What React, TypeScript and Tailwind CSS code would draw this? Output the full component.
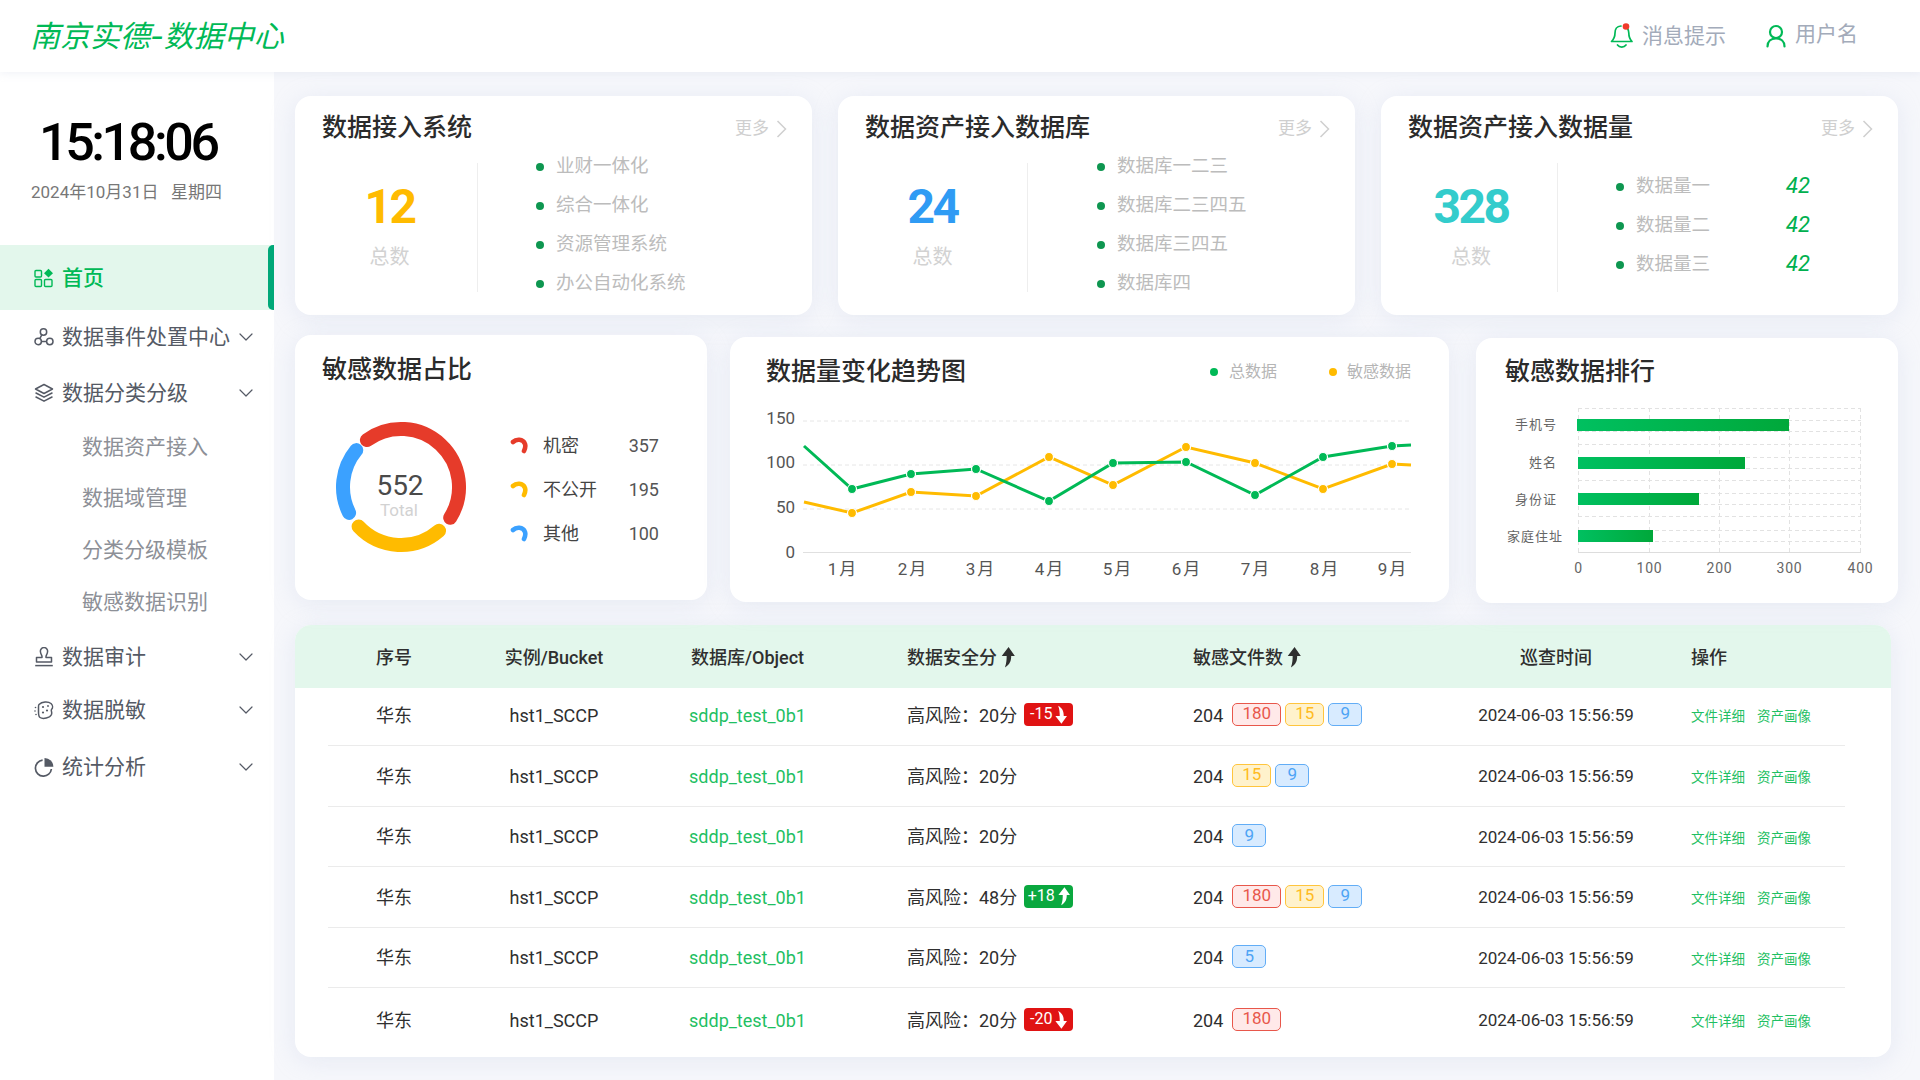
import { ChevronDown } from 'lucide-react'

const GREEN = '#00b956'

// ---- small icons ----
const HomeIcon = () => (
  <svg width="20" height="20" viewBox="0 0 20 20" fill="none" stroke="#00b956" strokeWidth="1.4">
    <rect x="1" y="2.5" width="6.5" height="6.5" rx="1" />
    <rect x="1" y="11.5" width="6.5" height="7" rx="1" />
    <rect x="10.5" y="11.5" width="7.5" height="7" rx="1" />
    <path d="M14.5 0.8 L19 5.2 L14.5 9.6 L10 5.2 Z" fill="#00b956" stroke="none" />
  </svg>
)
const EventIcon = () => (
  <svg width="20" height="20" viewBox="0 0 20 20" fill="none" stroke="#555a65" strokeWidth="1.5">
    <circle cx="9.5" cy="5" r="3.2" />
    <circle cx="4.2" cy="14.5" r="3.2" />
    <circle cx="15.8" cy="14.5" r="3.2" />
    <path d="M7.8 7.8 L5.8 11.6 M7.4 14.5 H12.6" />
  </svg>
)
const LayersIcon = () => (
  <svg width="20" height="20" viewBox="0 0 20 20" fill="none" stroke="#555a65" strokeWidth="1.5" strokeLinejoin="round" strokeLinecap="round">
    <path d="M10 1.5 L18.5 6 L10 10.5 L1.5 6 Z" />
    <path d="M2 10 L10 14.2 L18 10" />
    <path d="M2 14 L10 18.2 L18 14" />
  </svg>
)
const StampIcon = () => (
  <svg width="20" height="20" viewBox="0 0 20 20" fill="none" stroke="#555a65" strokeWidth="1.5" strokeLinejoin="round">
    <path d="M6.5 5 A3.6 3.6 0 1 1 13.5 5 C13.5 7 12 8 12 9.5 V10.5 H17.5 V15 H2.5 V10.5 H8 V9.5 C8 8 6.5 7 6.5 5 Z" />
    <path d="M1.2 18.6 H18.8" />
  </svg>
)
const MaskIcon = () => (
  <svg width="20" height="20" viewBox="0 0 20 20" fill="none" stroke="#555a65" strokeWidth="1.5">
    <path d="M5 4.5 C8 1.5 14 1 17 3.5 C19 5.5 19 8 17.5 9.5 C16.5 10.5 18.5 12 17.5 14.5 C16 18 9 19.5 6 17.5 C4.5 16.5 4.5 14 4.5 12 V7 C4.5 6 4.5 5 5 4.5 Z" />
    <g fill="#555a65" stroke="none">
      <circle cx="9" cy="7" r="1.1" />
      <circle cx="13" cy="10.5" r="1.1" />
      <circle cx="9" cy="12.5" r="1.1" />
      <circle cx="14" cy="6" r="0.9" />
      <circle cx="1.5" cy="7.5" r="0.8" />
      <circle cx="1" cy="11" r="0.8" />
      <circle cx="2" cy="14.5" r="0.8" />
    </g>
  </svg>
)
const PieIcon = () => (
  <svg width="20" height="20" viewBox="0 0 20 20" fill="none">
    <path d="M8.6 3.2 A8 8 0 1 0 17.4 12" stroke="#555a65" strokeWidth="1.7" />
    <path d="M10.5 1 A8.8 8.8 0 0 1 19.4 9.8 H10.5 Z" fill="#555a65" />
  </svg>
)
const BellIcon = () => (
  <svg width="24" height="26" viewBox="0 0 24 26" fill="none" stroke="#00b956" strokeWidth="1.7" strokeLinecap="round" strokeLinejoin="round">
    <path d="M11 3 C6.5 3 5 6.5 5 10 C5 14 4 16 1.5 18.5 H22 C19.5 16 18.8 14 18.8 10 C18.8 8.5 18.5 7 17.5 5.5" />
    <path d="M7.5 22 C9.5 24.8 14 24.8 16 22" />
    <circle cx="16" cy="3.5" r="3.3" fill="#f03a2a" stroke="none" />
  </svg>
)
const UserIcon = () => (
  <svg width="20" height="24" viewBox="0 0 20 24" fill="none" stroke="#00b956" strokeWidth="2.2" strokeLinecap="round">
    <circle cx="10" cy="8" r="6" />
    <path d="M1.5 22.5 C1.5 17.5 5 14.5 10 14.5 C15 14.5 18.5 17.5 18.5 22.5" />
  </svg>
)
const More = () => (
  <div className="flex translate-y-[1px] items-center gap-[7px] text-[17px] text-[#cfcfcf]">
    更多
    <svg width="11" height="18" viewBox="0 0 11 18" fill="none" stroke="#cfcfcf" strokeWidth="1.5">
      <path d="M1.5 1 L9.5 9 L1.5 17" />
    </svg>
  </div>
)
const SortArrow = ({ color, down, big }: { color: string; down?: boolean; big?: boolean }) => (
  <svg width={big ? 15 : 13} height={big ? 21 : 19} viewBox="0 0 14 20" fill={color} className={down ? '-scale-y-100' : ''}>
    <path d="M8 0 L14 8.5 H10.5 C10.5 13 9.5 16.5 4.5 19.5 C6 15.5 6.2 12 6.2 8.5 H1.5 Z" />
  </svg>
)

// ---- sidebar ----
const menu = [
  { label: '数据事件处置中心', icon: <EventIcon />, h: 'h-[54px]', chev: true },
  { label: '数据分类分级', icon: <LayersIcon />, h: 'h-[58px]', chev: true },
  { label: '数据资产接入', sub: true, h: 'h-[50px]' },
  { label: '数据域管理', sub: true, h: 'h-[52px]' },
  { label: '分类分级模板', sub: true, h: 'h-[52px]' },
  { label: '敏感数据识别', sub: true, h: 'h-[52px]' },
  { label: '数据审计', icon: <StampIcon />, h: 'h-[58px]', chev: true },
  { label: '数据脱敏', icon: <MaskIcon />, h: 'h-[48px]', chev: true },
  { label: '统计分析', icon: <PieIcon />, h: 'h-[66px]', chev: true },
]

function Sidebar() {
  return (
    <aside className="w-[274px] shrink-0 bg-white">
      <div className="mt-[31px] ml-[39px] h-[80px] text-[52px] leading-[80px] font-medium tracking-[-3.4px] text-black">15:18:06</div>
      <div className="ml-[31px] -mt-[1px] h-[20px] text-[17px] leading-[20px] text-[#777] whitespace-pre">2024年10月31日   星期四</div>
      <div className="relative mt-[43px] flex h-[65px] items-center bg-[#e3f7ec] pl-[34px]">
        <HomeIcon />
        <span className="ml-[8px] pt-[2px] text-[21px] font-medium text-[#00b956]">首页</span>
        <div className="absolute right-0 top-0 h-full w-[6px] rounded-l-[5px] bg-[#00a878]" />
      </div>
      {menu.map((m) => (
        <div key={m.label} className={`${m.h} flex items-center pr-[16px] ${m.sub ? 'pl-[82px]' : 'pl-[34px]'}`}>
          {m.icon}
          <span className={m.sub ? 'pt-[2px] text-[21px] text-[#8d9097]' : 'ml-[8px] pt-[2px] text-[21px] text-[#555a65]'}>{m.label}</span>
          {m.chev && <ChevronDown size={24} strokeWidth={1.2} color="#555a65" className="ml-auto" />}
        </div>
      ))}
    </aside>
  )
}

// ---- top row cards ----
function StatCard(props: {
  title: string
  num: string
  numCls: string
  statCls: string
  listCls: string
  items: string[]
  values?: boolean
}) {
  return (
    <div className="h-[219px] w-[517px] rounded-[16px] bg-white shadow-[0_4px_24px_rgba(190,200,225,0.28)]">
      <div className="flex h-[62px] items-center justify-between pl-[27px] pr-[25px] pt-[2px]">
        <span className="text-[25px] font-medium text-[#2b2b2b]">{props.title}</span>
        <More />
      </div>
      <div className="flex">
        <div className={`${props.statCls} mt-[5px] h-[129px] shrink-0 border-r border-[#eeeeee] text-center`}>
          <div className={`h-[84px] text-[48px] leading-[88px] font-bold tracking-[-2.5px] ${props.numCls}`}>{props.num}</div>
          <div className="h-[20px] text-[20px] leading-[20px] text-[#d2d2d2]">总数</div>
        </div>
        <div className={`${props.listCls} flex flex-col gap-[15px]`}>
          {props.items.map((t) => (
            <div key={t} className="flex h-[24px] items-center text-[18.5px] text-[#bcbcbc]">
              <span className="mr-[12px] h-[8px] w-[8px] rounded-full bg-[#0e9650]" />
              <span className="w-[72px] whitespace-nowrap">{t}</span>
              {props.values && <span className="ml-[78px] -translate-y-[2px] text-[22px] italic text-[#00b04f]">42</span>}
            </div>
          ))}
        </div>
      </div>
    </div>
  )
}

// ---- donut ----
function polar(a: number) {
  const r = (a * Math.PI) / 180
  return `${70 + 58 * Math.sin(r)} ${70 - 58 * Math.cos(r)}`
}
function arc(from: number, to: number) {
  return `M${polar(from)} A58 58 0 ${to - from > 180 ? 1 : 0} 1 ${polar(to)}`
}

const LegendHook = ({ color }: { color: string }) => (
  <svg width="18" height="17" viewBox="0 0 18 17" fill="none" stroke={color} strokeWidth="4.6" strokeLinecap="round">
    <path d="M3 5 C6 2 13 1.5 15 7 C16 10 15 12 14 14" />
  </svg>
)

function RatioCard() {
  const legend = [
    { name: '机密', val: '357', color: '#e63b2a' },
    { name: '不公开', val: '195', color: '#ffbb00' },
    { name: '其他', val: '100', color: '#3ba1ff' },
  ]
  return (
    <div className="h-[265px] w-[412px] shrink-0 rounded-[16px] bg-white shadow-[0_4px_24px_rgba(190,200,225,0.28)]">
      <div className="flex h-[70px] items-center pl-[27px] text-[25px] font-medium text-[#2b2b2b]">敏感数据占比</div>
      <div className="flex">
        <svg width="140" height="140" viewBox="0 0 140 140" fill="none" strokeWidth="14" strokeLinecap="round" className="ml-[36px] mt-[12px] shrink-0">
          <path d={arc(-36, 122)} stroke="#e63b2a" />
          <path d={arc(139, 227)} stroke="#ffbb00" />
          <path d={arc(243.5, 309.5)} stroke="#3ba1ff" />
          <text x="69" y="78" textAnchor="middle" fontSize="28" fill="#4a4a4a" stroke="none">552</text>
          <text x="68" y="99" textAnchor="middle" fontSize="17" fill="#d2d2d2" stroke="none">Total</text>
        </svg>
        <div className="ml-[39px] mt-[28px] flex w-[149px] flex-col gap-[20px]">
          {legend.map((l) => (
            <div key={l.name} className="flex h-[24px] items-center text-[18px]">
              <LegendHook color={l.color} />
              <span className="ml-[15px] text-[#444]">{l.name}</span>
              <span className="ml-auto text-[#555]">{l.val}</span>
            </div>
          ))}
        </div>
      </div>
    </div>
  )
}

// ---- line chart, numbers are pixel positions of the drawing ----
const months = [843, 913, 981, 1050, 1118, 1187, 1256, 1325, 1393]
const greenLine = [[804, 446], [852, 489], [911, 474], [976, 469], [1049, 501], [1113, 463], [1186, 462], [1255, 495], [1323, 457], [1392, 446], [1411, 445]]
const yellowLine = [[804, 502], [852, 513], [911, 492], [976, 496], [1049, 457], [1113, 485], [1186, 447], [1255, 463], [1323, 489], [1392, 464], [1411, 465]]

function Series({ pts, color }: { pts: number[][]; color: string }) {
  return (
    <g>
      <polyline points={pts.map((p) => p.join(',')).join(' ')} fill="none" stroke={color} strokeWidth="3" />
      {pts.slice(1, 10).map((p) => (
        <circle key={p[0]} cx={p[0]} cy={p[1]} r="4.5" fill={color} stroke="#fff" strokeWidth="1.2" />
      ))}
    </g>
  )
}

function TrendCard() {
  return (
    <div className="ml-[23px] mt-[2px] h-[265px] w-[719px] shrink-0 rounded-[16px] bg-white shadow-[0_4px_24px_rgba(190,200,225,0.28)]">
      <div className="flex h-[70px] items-center pl-[36px] pr-[38px]">
        <span className="text-[25px] font-medium text-[#2b2b2b]">数据量变化趋势图</span>
        <span className="ml-auto h-[8px] w-[8px] rounded-full bg-[#00b956]" />
        <span className="ml-[11px] text-[16px] text-[#b5b5b5]">总数据</span>
        <span className="ml-[52px] h-[8px] w-[8px] rounded-full bg-[#ffbb00]" />
        <span className="ml-[10px] text-[16px] text-[#b5b5b5]">敏感数据</span>
      </div>
      <svg width="719" height="195" viewBox="730 407 719 195" fontSize="17" fill="#555">
        {[421, 465, 509].map((y) => (
          <line key={y} x1="803" x2="1411" y1={y} y2={y} stroke="#e6e6e6" strokeWidth="1" strokeDasharray="4 3" />
        ))}
        <line x1="803" x2="1411" y1="552.5" y2="552.5" stroke="#e0e0e0" />
        {[['150', 424], ['100', 468], ['50', 513], ['0', 558]].map(([t, y]) => (
          <text key={t} x="795" y={y} textAnchor="end">{t}</text>
        ))}
        {months.map((x, i) => (
          <text key={x} x={x} y="575" textAnchor="middle" letterSpacing="2">{i + 1}月</text>
        ))}
        <Series pts={yellowLine} color="#ffbb00" />
        <Series pts={greenLine} color="#00b956" />
      </svg>
    </div>
  )
}

// ---- bar chart ----
const vGrid = [1578.5, 1649.5, 1719.5, 1789.5, 1860.5]
const hGrid = [408.5, 420.5, 431.5, 444.5, 457.5, 468.5, 480.5, 493.5, 504.5, 516.5, 530.5, 541.5]
const bars = [
  { name: '手机号', x: 1577, w: 212, y: 419, ty: 429, tx: 1557 },
  { name: '姓名', x: 1578, w: 167, y: 457, ty: 467, tx: 1557 },
  { name: '身份证', x: 1578, w: 121, y: 493, ty: 504, tx: 1557 },
  { name: '家庭住址', x: 1578, w: 75, y: 530, ty: 541, tx: 1563 },
]

function RankCard() {
  return (
    <div className="ml-[27px] mt-[3px] h-[265px] w-[422px] shrink-0 rounded-[16px] bg-white shadow-[0_4px_24px_rgba(190,200,225,0.28)]">
      <div className="flex h-[68px] items-center pl-[29px] text-[25px] font-medium text-[#2b2b2b]">敏感数据排行</div>
      <svg width="422" height="197" viewBox="1476 406 422 197" fill="#666">
        <defs>
          <linearGradient id="barFill" x1="0" x2="1" y1="0" y2="0">
            <stop offset="0" stopColor="#00c060" />
            <stop offset="1" stopColor="#00a83a" />
          </linearGradient>
        </defs>
        {vGrid.map((x) => (
          <line key={x} x1={x} x2={x} y1="408" y2="552" stroke="#e2e2e2" strokeDasharray="4 3" />
        ))}
        {hGrid.map((y) => (
          <line key={y} x1="1578" x2="1861" y1={y} y2={y} stroke="#e2e2e2" strokeDasharray="4 3" />
        ))}
        <line x1="1578" x2="1861" y1="552.5" y2="552.5" stroke="#dddddd" />
        {bars.map((b) => (
          <g key={b.name}>
            <rect x={b.x} y={b.y} width={b.w} height="12" fill="url(#barFill)" />
            <text x={b.tx} y={b.ty} textAnchor="end" fontSize="13" letterSpacing="1">{b.name}</text>
          </g>
        ))}
        {['0', '100', '200', '300', '400'].map((t, i) => (
          <text key={t} x={vGrid[i]} y="573" textAnchor="middle" fontSize="14" letterSpacing="0.8">{t}</text>
        ))}
      </svg>
    </div>
  )
}

// ---- table ----
type Row = { score: string; delta?: { t: string; up: boolean }; tags: string[]; h: string }
const rows: Row[] = [
  { score: '20', delta: { t: '-15', up: false }, tags: ['180', '15', '9'], h: 'h-[58px] pb-[3px]' },
  { score: '20', tags: ['15', '9'], h: 'h-[61px]' },
  { score: '20', tags: ['9'], h: 'h-[60px]' },
  { score: '48', delta: { t: '+18', up: true }, tags: ['180', '15', '9'], h: 'h-[61px]' },
  { score: '20', tags: ['5'], h: 'h-[60px]' },
  { score: '20', delta: { t: '-20', up: false }, tags: ['180'], h: 'h-[69px] pb-[5px]' },
]

const tagCls = (t: string) => {
  if (t === '180') return 'w-[49px] border-[#e8574b] bg-[#ffe9e9] text-[#e8574b]'
  if (t === '15') return 'w-[39px] border-[#ffc53d] bg-[#fff2cc] text-[#ffbb22]'
  return 'w-[34px] border-[#62adf6] bg-[#d8ebff] text-[#4ea4f5]'
}

const cols = 'grid grid-cols-[132px_188px_199px_346px_273px_180px_199px] items-center'

function DataTable() {
  return (
    <div className="mt-[22px] h-[432px] w-[1596px] overflow-hidden rounded-[16px] bg-white shadow-[0_4px_24px_rgba(190,200,225,0.28)]">
      <div className={`${cols} h-[63px] bg-[#e3f7ec] pl-[33px] pt-[2px] text-[18px] font-medium text-[#2f2f2f]`}>
        <div className="text-center">序号</div>
        <div className="text-center">实例/Bucket</div>
        <div className="text-center">数据库/Object</div>
        <div className="flex items-center gap-[3px] pl-[60px]">数据安全分<SortArrow big color="#2f2f2f" /></div>
        <div className="flex items-center gap-[3px]">敏感文件数<SortArrow big color="#2f2f2f" /></div>
        <div className="text-center">巡查时间</div>
        <div className="pl-[45px]">操作</div>
      </div>
      <div className="ml-[33px] w-[1517px]">
        {rows.map((r, i) => (
          <div key={i} className={`${cols} ${r.h} ${i < 5 ? 'border-b border-[#ebebeb]' : ''} text-[18px] text-[#2f2f2f]`}>
            <div className="text-center">华东</div>
            <div className="text-center">hst1_SCCP</div>
            <div className="text-center text-[#1fbf63]">sddp_test_0b1</div>
            <div className="flex items-center pl-[60px]">
              <span>高风险：{r.score}分</span>
              {r.delta && (
                <span className={`ml-[7px] flex h-[23px] w-[49px] -translate-y-[1px] items-center justify-center gap-[2px] rounded-[4px] text-[16px] text-white ${r.delta.up ? 'bg-[#0aa83f]' : 'bg-[#e01313]'}`}>
                  {r.delta.t}
                  <SortArrow color="#ffffff" down={!r.delta.up} />
                </span>
              )}
            </div>
            <div className="flex items-center">
              <span className="mr-[9px]">204</span>
              <div className="flex -translate-y-[1px] gap-[4px]">
                {r.tags.map((t) => (
                  <span key={t} className={`flex h-[23px] items-center justify-center rounded-[5px] border text-[17px] ${tagCls(t)}`}>{t}</span>
                ))}
              </div>
            </div>
            <div className="pt-[2px] text-center text-[17px]">2024-06-03 15:56:59</div>
            <div className="flex gap-[12px] pl-[45px] pt-[3px] text-[13.5px] text-[#1fbf63]">
              <span>文件详细</span>
              <span>资产画像</span>
            </div>
          </div>
        ))}
      </div>
    </div>
  )
}

export default function App() {
  return (
    <div className="flex h-screen w-full flex-col overflow-hidden bg-[#f6f7fb] font-['Roboto','Noto_Sans_CJK_SC',sans-serif]">
      <header className="relative z-10 flex h-[72px] shrink-0 items-center bg-white pl-[30px] shadow-[0_1px_8px_rgba(190,200,225,0.25)]">
        <span className="font-['Inter','Noto_Sans_CJK_SC',sans-serif] text-[30px] italic" style={{ color: GREEN }}>南京实德-数据中心</span>
        <div className="ml-auto flex items-center">
          <BellIcon />
          <span className="ml-[8px] translate-y-[1px] text-[21px] text-[#a3abba]">消息提示</span>
          <span className="ml-[41px] -translate-x-[1px]"><UserIcon /></span>
          <span className="ml-[8px] mr-[62px] -translate-y-[1px] text-[21px] text-[#a3abba]">用户名</span>
        </div>
      </header>
      <div className="flex flex-1">
        <Sidebar />
        <main className="min-w-0 flex-1 pl-[21px] pt-[24px]">
          <div className="flex gap-[26px]">
            <StatCard
              title="数据接入系统"
              num="12"
              numCls="text-[#ffbb00]"
              statCls="w-[183px] pl-[7px]"
              listCls="ml-[58px] -mt-[3px]"
              items={['业财一体化', '综合一体化', '资源管理系统', '办公自动化系统']}
            />
            <StatCard
              title="数据资产接入数据库"
              num="24"
              numCls="text-[#2f9bf4]"
              statCls="w-[190px]"
              listCls="ml-[69px] -mt-[3px]"
              items={['数据库一二三', '数据库二三四五', '数据库三四五', '数据库四']}
            />
            <StatCard
              title="数据资产接入数据量"
              num="328"
              numCls="text-[#33cccc]"
              statCls="w-[177px] pl-[4px]"
              listCls="ml-[58px] mt-[17px]"
              items={['数据量一', '数据量二', '数据量三']}
              values
            />
          </div>
          <div className="mt-[20px] flex items-start">
            <RatioCard />
            <TrendCard />
            <RankCard />
          </div>
          <DataTable />
        </main>
      </div>
    </div>
  )
}
